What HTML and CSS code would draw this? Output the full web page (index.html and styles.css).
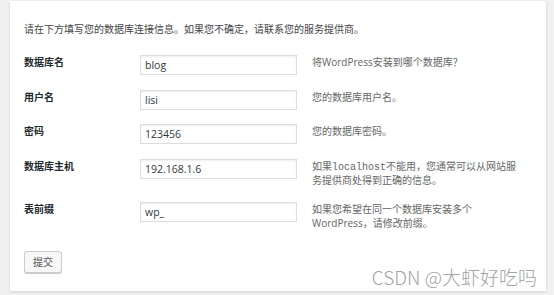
FILE: index.html
```html
<!DOCTYPE html>
<html lang="zh-CN">
<head>
<meta charset="utf-8">
<title>数据库连接信息</title>
<link rel="stylesheet" href="styles.css">
</head>
<body>
<div class="card">
  <p class="intro">请在下方填写您的数据库连接信息。如果您不确定，请联系您的服务提供商。</p>
  <div class="form">
    <div class="lbl">数据库名</div>
    <div class="field"><input class="inp" type="text" value="blog"></div>
    <div class="help">将<span class="en">WordPress</span>安装到哪个数据库？</div>

    <div class="lbl">用户名</div>
    <div class="field"><input class="inp" type="text" value="lisi"></div>
    <div class="help">您的数据库用户名。</div>

    <div class="lbl">密码</div>
    <div class="field"><input class="inp" type="text" value="123456"></div>
    <div class="help">您的数据库密码。</div>

    <div class="lbl">数据库主机</div>
    <div class="field"><input class="inp" type="text" value="192.168.1.6"></div>
    <div class="help">如果<code class="mono">localhost</code>不能用，您通常可以从网站服务提供商处得到正确的信息。</div>

    <div class="lbl">表前缀</div>
    <div class="field"><input class="inp" type="text" value="wp_"></div>
    <div class="help">如果您希望在同一个数据库安装多个<span class="en">WordPress</span>，请修改前缀。</div>
  </div>
  <button class="btn" type="button">提交</button>
  <div class="wm">CSDN @大虾好吃吗</div>
</div>
</body>
</html>
```

FILE: styles.css
```css
html, body {
  height: 100%;
}
body {
  margin: 0;
  padding: 1px 8px 0 10px;
  box-sizing: border-box;
  background: #f1f1f1;
  font-family: "Noto Sans CJK SC", "Open Sans", sans-serif;
  font-size: 10px;
  color: #444;
}
.card {
  position: relative;
  background: #fff;
  box-shadow: 0 1px 3px rgba(0, 0, 0, 0.13);
  padding: 21px 14px 18px;
}
.intro {
  margin: 0;
  line-height: 14px;
  color: #444;
}
.form {
  display: grid;
  grid-template-columns: 116px 172px 210px;
  margin-top: 11.65px;
}
.form > div {
  padding: 7.35px 0;
  line-height: 14px;
}
.lbl {
  font-weight: bold;
  color: #23282d;
}
.inp {
  display: block;
  box-sizing: border-box;
  width: 157px;
  height: 20px;
  margin: 0;
  padding: 0 4px;
  border: 1px solid #ddd;
  box-shadow: inset 0 1px 2px rgba(0, 0, 0, 0.07);
  background: #fff;
  font-family: "Open Sans", sans-serif;
  font-size: 10.5px;
  color: #32373c;
  outline: none;
}
.help {
  color: #666;
}
.en {
  font-family: "Open Sans", sans-serif;
  line-height: 10px;
}
.mono {
  font-family: "Liberation Mono", "DejaVu Sans Mono", monospace;
  font-size: 10px;
  line-height: 10px;
}
.btn {
  display: block;
  margin-top: 14px;
  width: 38px;
  height: 22px;
  padding: 0;
  border: 1px solid #ccc;
  border-radius: 3px;
  background: #f7f7f7;
  box-shadow: 0 1px 0 #ccc;
  font-family: "Noto Sans CJK SC", sans-serif;
  font-size: 10px;
  line-height: 20px;
  color: #555;
}
.wm {
  position: absolute;
  right: 9px;
  bottom: 2px;
  font-family: "Noto Sans CJK SC", sans-serif;
  font-size: 19px;
  font-weight: 300;
  line-height: 24px;
  color: #a3a3a3;
  white-space: nowrap;
}
```
